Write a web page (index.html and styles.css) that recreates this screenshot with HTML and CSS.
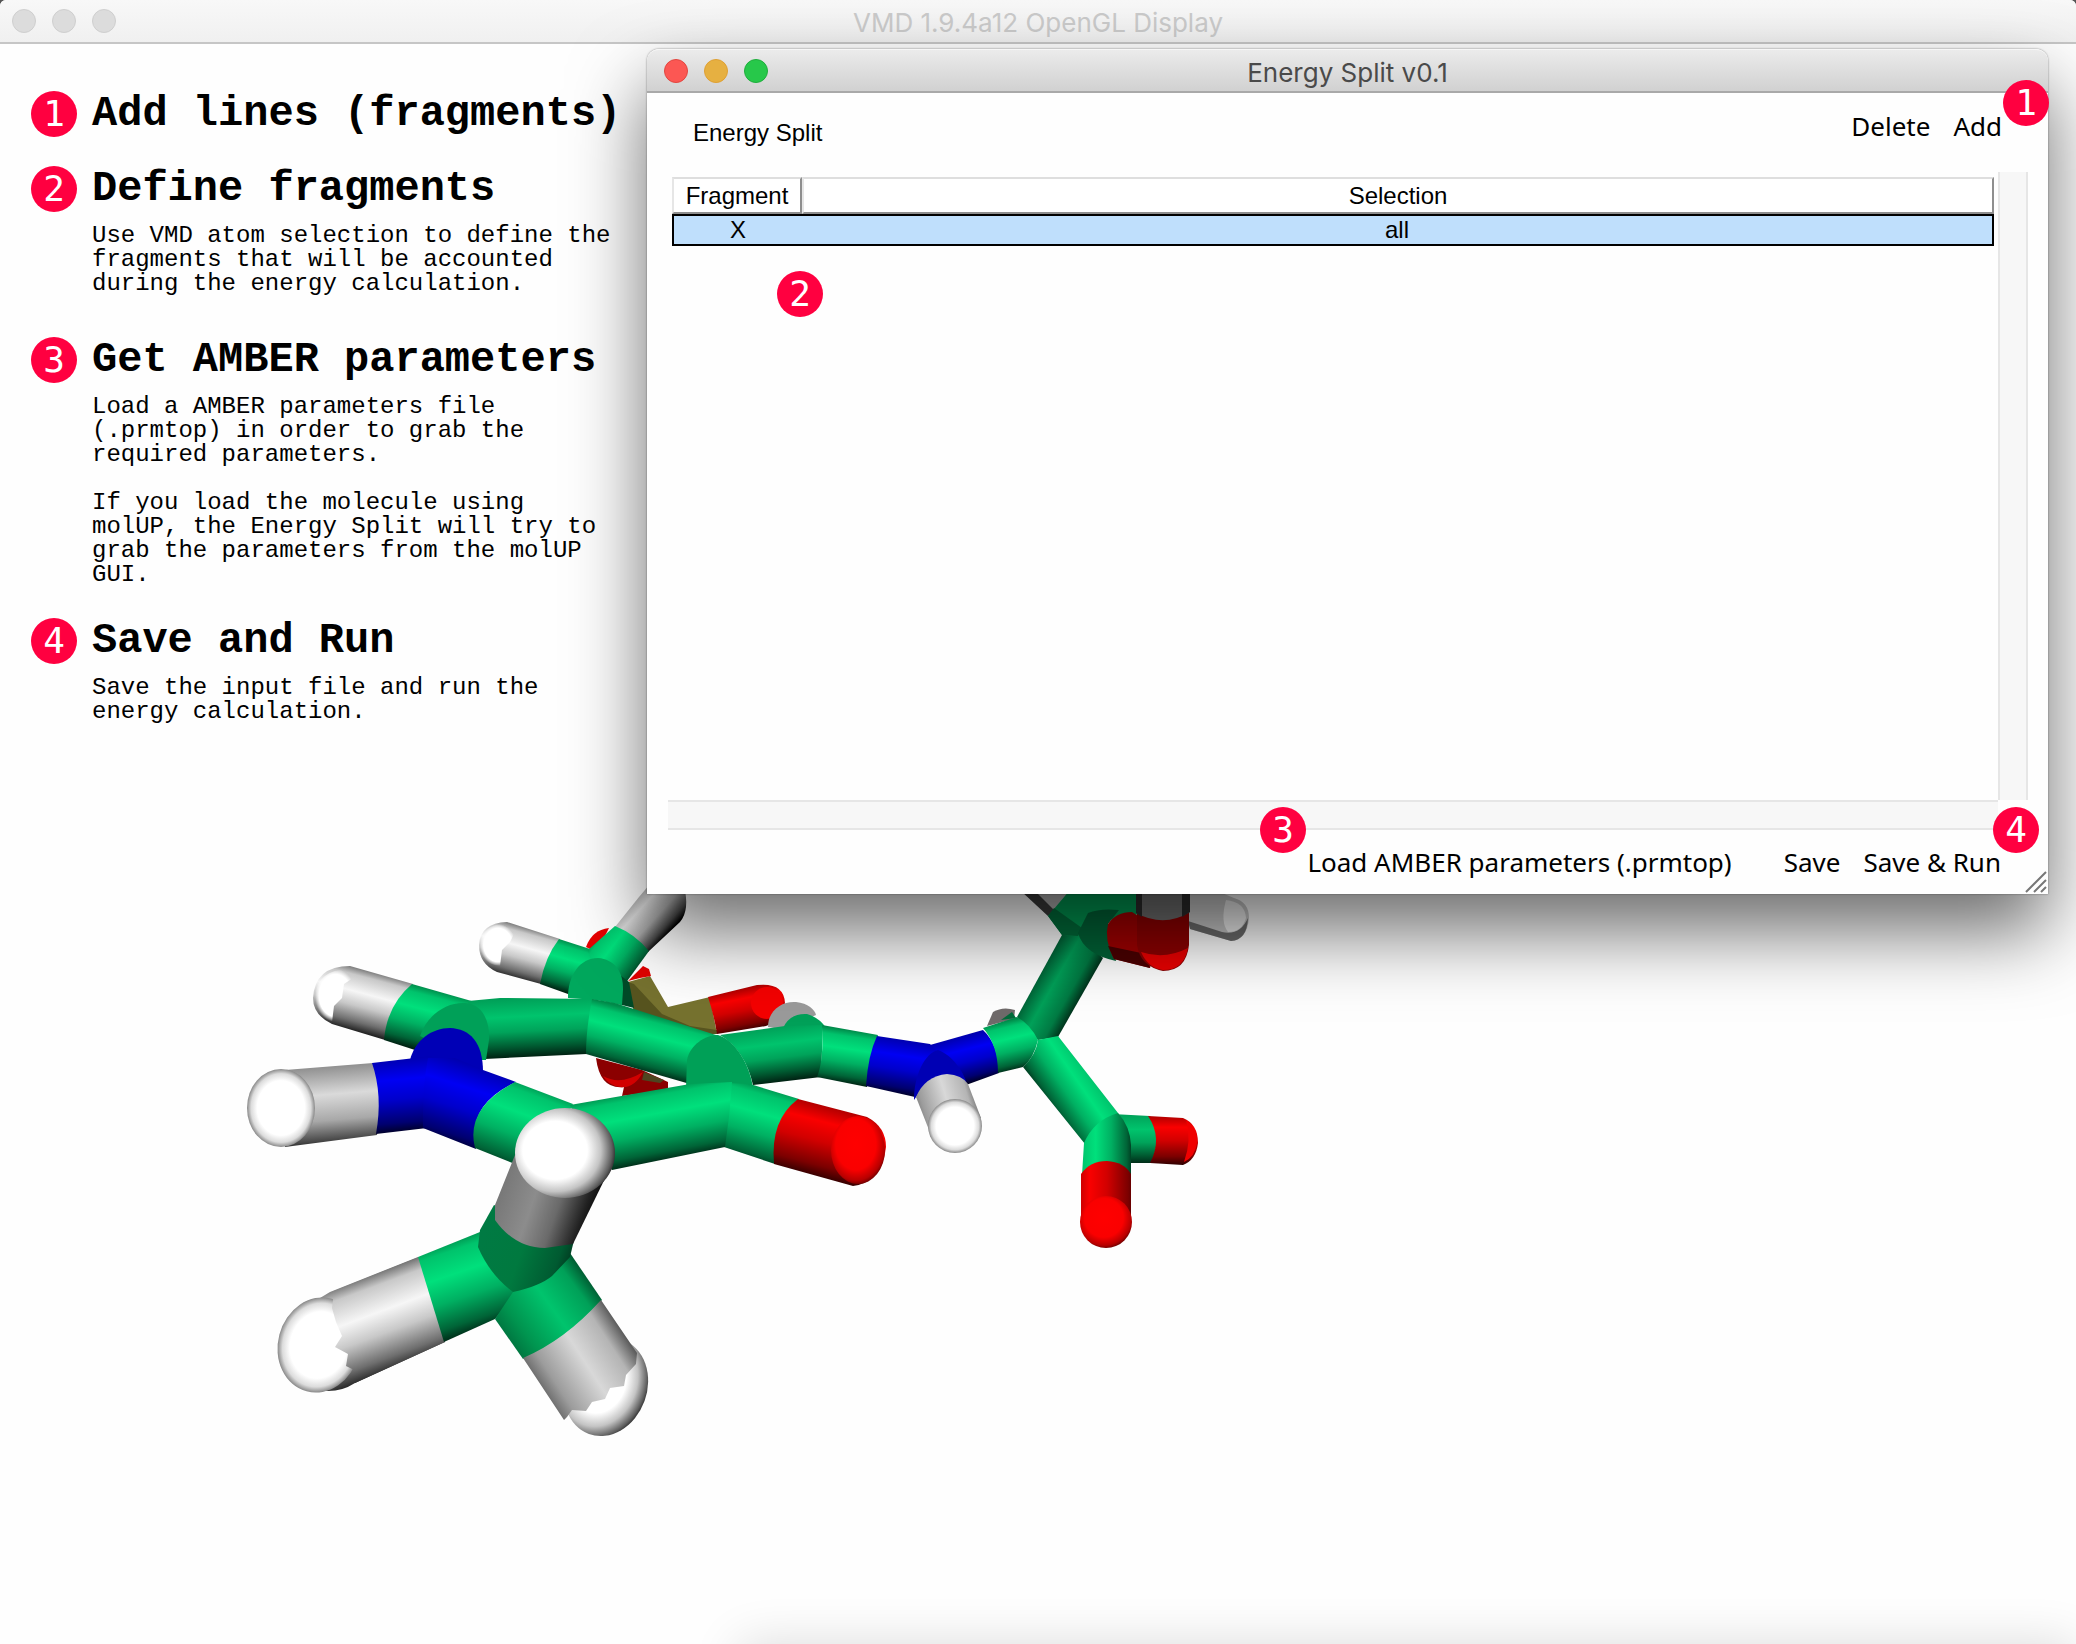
FILE: index.html
```html
<!DOCTYPE html>
<html lang="en">
<head>
<meta charset="utf-8">
<title>VMD 1.9.4a12 OpenGL Display</title>
<link rel="stylesheet" href="styles.css">
</head>
<body>
<div class="display">
  <header class="titlebar titlebar-inactive">
    <div class="lights">
      <button class="light" type="button" aria-label="Close display"></button>
      <button class="light" type="button" aria-label="Minimize display"></button>
      <button class="light" type="button" aria-label="Zoom display"></button>
    </div>
    <h1 class="title">VMD 1.9.4a12 OpenGL Display</h1>
  </header>

  <main class="stage">
    <svg class="molecule" viewBox="240 880 1020 570" width="1020" height="570" role="img" aria-label="Molecule">
      <defs>
        <linearGradient id="green"><stop offset="0" stop-color="#008a4a"/><stop offset=".12" stop-color="#00c36c"/><stop offset=".35" stop-color="#00e07c"/><stop offset=".6" stop-color="#00b062"/><stop offset=".85" stop-color="#006437"/><stop offset="1" stop-color="#001c0f"/></linearGradient>
        <linearGradient id="mid"><stop offset="0" stop-color="#00a058"/><stop offset=".3" stop-color="#00c46d"/><stop offset=".55" stop-color="#00a35a"/><stop offset=".8" stop-color="#005a31"/><stop offset="1" stop-color="#001a0e"/></linearGradient>
        <linearGradient id="side"><stop offset="0" stop-color="#006f3d"/><stop offset=".2" stop-color="#00944f"/><stop offset=".55" stop-color="#00c46d"/><stop offset=".85" stop-color="#00a058"/><stop offset="1" stop-color="#005a31"/></linearGradient>
        <linearGradient id="deep"><stop offset="0" stop-color="#005c33"/><stop offset=".35" stop-color="#00a058"/><stop offset=".7" stop-color="#007a43"/><stop offset="1" stop-color="#001a0e"/></linearGradient>
        <linearGradient id="shade"><stop offset="0" stop-color="#007a43"/><stop offset=".4" stop-color="#00793f"/><stop offset=".75" stop-color="#005a31"/><stop offset="1" stop-color="#001a0e"/></linearGradient>
        <linearGradient id="white"><stop offset="0" stop-color="#777"/><stop offset=".12" stop-color="#c8c8c8"/><stop offset=".38" stop-color="#f6f6f6"/><stop offset=".6" stop-color="#c8c8c8"/><stop offset=".85" stop-color="#6e6e6e"/><stop offset="1" stop-color="#222"/></linearGradient>
        <linearGradient id="silver"><stop offset="0" stop-color="#8a8a8a"/><stop offset=".35" stop-color="#dadada"/><stop offset=".65" stop-color="#a8a8a8"/><stop offset=".88" stop-color="#484848"/><stop offset="1" stop-color="#000"/></linearGradient>
        <linearGradient id="satin"><stop offset="0" stop-color="#6a6a6a"/><stop offset=".15" stop-color="#9c9c9c"/><stop offset=".5" stop-color="#d8d8d8"/><stop offset=".8" stop-color="#b4b4b4"/><stop offset="1" stop-color="#4a4a4a"/></linearGradient>
        <linearGradient id="gray"><stop offset="0" stop-color="#777"/><stop offset=".35" stop-color="#8c8c8c"/><stop offset=".6" stop-color="#6a6a6a"/><stop offset=".85" stop-color="#222"/><stop offset="1" stop-color="#000"/></linearGradient>
        <linearGradient id="blue"><stop offset="0" stop-color="#0000a8"/><stop offset=".3" stop-color="#0000f4"/><stop offset=".55" stop-color="#0000cc"/><stop offset=".85" stop-color="#000070"/><stop offset="1" stop-color="#000018"/></linearGradient>
        <linearGradient id="red"><stop offset="0" stop-color="#a00000"/><stop offset=".25" stop-color="#fa0000"/><stop offset=".5" stop-color="#d20000"/><stop offset=".8" stop-color="#7c0000"/><stop offset="1" stop-color="#1c0000"/></linearGradient>
        <radialGradient id="ball"><stop offset="0" stop-color="#fff"/><stop offset=".7" stop-color="#fff"/><stop offset=".88" stop-color="#dcdcdc"/><stop offset="1" stop-color="#888"/></radialGradient>
        <radialGradient id="ballshade" cx=".4" cy=".47" r=".62"><stop offset="0" stop-color="#fff"/><stop offset=".52" stop-color="#fff"/><stop offset=".74" stop-color="#c4c4c4"/><stop offset=".92" stop-color="#5e5e5e"/><stop offset="1" stop-color="#222"/></radialGradient>
        <radialGradient id="redball" cx=".46" cy=".42" r=".62"><stop offset="0" stop-color="#f00"/><stop offset=".6" stop-color="#fa0000"/><stop offset=".85" stop-color="#b80000"/><stop offset="1" stop-color="#500000"/></radialGradient>
        <radialGradient id="glow"><stop offset="0" stop-color="#fff"/><stop offset=".8" stop-color="#fff"/><stop offset="1" stop-color="#fff" stop-opacity="0"/></radialGradient>
        <linearGradient id="b1" href="#white" gradientUnits="userSpaceOnUse" x1="530" y1="928" x2="516" y2="979"/>
        <linearGradient id="b2" href="#green" gradientUnits="userSpaceOnUse" x1="575" y1="943" x2="561" y2="992"/>
        <linearGradient id="b3" href="#silver" gradientUnits="userSpaceOnUse" x1="620" y1="902" x2="662" y2="940"/>
        <linearGradient id="b4" href="#green" gradientUnits="userSpaceOnUse" x1="593" y1="938" x2="640" y2="974"/>
        <linearGradient id="b5" href="#white" gradientUnits="userSpaceOnUse" x1="382" y1="974" x2="366" y2="1034"/>
        <linearGradient id="b6" href="#green" gradientUnits="userSpaceOnUse" x1="440" y1="991" x2="424" y2="1052"/>
        <linearGradient id="b7" href="#mid" gradientUnits="userSpaceOnUse" x1="530" y1="998" x2="533" y2="1058"/>
        <linearGradient id="b8" href="#green" gradientUnits="userSpaceOnUse" x1="650" y1="1014" x2="635" y2="1072"/>
        <linearGradient id="b9" href="#mid" gradientUnits="userSpaceOnUse" x1="775" y1="1027" x2="782" y2="1083"/>
        <linearGradient id="b10" href="#green" gradientUnits="userSpaceOnUse" x1="850" y1="1030" x2="842" y2="1084"/>
        <linearGradient id="b11" href="#blue" gradientUnits="userSpaceOnUse" x1="902" y1="1038" x2="893" y2="1095"/>
        <linearGradient id="b12" href="#blue" gradientUnits="userSpaceOnUse" x1="958" y1="1036" x2="970" y2="1084"/>
        <linearGradient id="b13" href="#satin" gradientUnits="userSpaceOnUse" x1="915" y1="1116" x2="982" y2="1096"/>
        <linearGradient id="b14" href="#green" gradientUnits="userSpaceOnUse" x1="1002" y1="1022" x2="1014" y2="1072"/>
        <linearGradient id="b15" href="#deep" gradientUnits="userSpaceOnUse" x1="1038" y1="974" x2="1084" y2="1000"/>
        <linearGradient id="b16" href="#green" gradientUnits="userSpaceOnUse" x1="1098" y1="1072" x2="1046" y2="1108"/>
        <linearGradient id="b17" href="#mid" gradientUnits="userSpaceOnUse" x1="1134" y1="1114" x2="1134" y2="1166"/>
        <linearGradient id="b18" href="#red" gradientUnits="userSpaceOnUse" x1="1166" y1="1114" x2="1166" y2="1167"/>
        <linearGradient id="b19" href="#green" gradientUnits="userSpaceOnUse" x1="1074" y1="1150" x2="1136" y2="1150"/>
        <linearGradient id="b20" href="#red" gradientUnits="userSpaceOnUse" x1="1072" y1="1190" x2="1142" y2="1190"/>
        <linearGradient id="b21" href="#silver" gradientUnits="userSpaceOnUse" x1="330" y1="1064" x2="337" y2="1150"/>
        <linearGradient id="b22" href="#blue" gradientUnits="userSpaceOnUse" x1="398" y1="1056" x2="405" y2="1134"/>
        <linearGradient id="b23" href="#blue" gradientUnits="userSpaceOnUse" x1="474" y1="1062" x2="447" y2="1146"/>
        <linearGradient id="b24" href="#green" gradientUnits="userSpaceOnUse" x1="540" y1="1086" x2="508" y2="1172"/>
        <linearGradient id="b25" href="#green" gradientUnits="userSpaceOnUse" x1="646" y1="1088" x2="660" y2="1164"/>
        <linearGradient id="b26" href="#green" gradientUnits="userSpaceOnUse" x1="768" y1="1086" x2="746" y2="1164"/>
        <linearGradient id="b27" href="#red" gradientUnits="userSpaceOnUse" x1="833" y1="1104" x2="813" y2="1180"/>
        <linearGradient id="b28" href="#gray" gradientUnits="userSpaceOnUse" x1="500" y1="1188" x2="596" y2="1222"/>
        <linearGradient id="b29" href="#green" gradientUnits="userSpaceOnUse" x1="446" y1="1240" x2="478" y2="1334"/>
        <linearGradient id="b30" href="#white" gradientUnits="userSpaceOnUse" x1="358" y1="1280" x2="392" y2="1372"/>
        <linearGradient id="b31" href="#side" gradientUnits="userSpaceOnUse" x1="505" y1="1342" x2="590" y2="1280"/>
        <linearGradient id="b32" href="#satin" gradientUnits="userSpaceOnUse" x1="538" y1="1384" x2="624" y2="1328"/>
        <linearGradient id="b33" href="#red" gradientUnits="userSpaceOnUse" x1="736" y1="988" x2="745" y2="1034"/>
        <linearGradient id="b34" href="#shade" gradientUnits="userSpaceOnUse" x1="484" y1="1230" x2="584" y2="1266"/>
      </defs>
      <g class="phosphate">
        <path fill="#e60000" d="M586 947Q592 930 609 928L602 942 590 949Z"/>
        <path fill="#76722f" d="M628 982L650 976 668 1007 710 997 717 1034 690 1034 634 1012Z"/>
        <path fill="#57541f" d="M628 982L634 984 662 1014 690 1026 717 1030 717 1034 690 1034 634 1012Z"/>
        <path fill="#e00000" d="M628 981L643 966 649 969 651 976 640 978Z"/>
        <path fill="url(#b33)" d="M708 997L757 985Q784 982 785 1003 780 1022 766 1026L717 1034Q714 1015 708 997Z"/>
        <circle cx="767" cy="1003" r="16" fill="#f40000"/>
        <path fill="#8b0000" d="M596 1058L642 1070 668 1082V1090L622 1096 624 1087Q600 1090 596 1058Z"/>
        <path fill="#d20000" d="M603 1076Q620 1086 643 1072 634 1089 620 1087 608 1085 603 1076Z"/>
        <path fill="#4d4520" d="M644 1072L664 1080 660 1083 642 1080Z"/>
      </g>
      <g class="methyl-back">
        <path fill="url(#b1)" d="M507 922L560 939Q545 957 541 984L497 972Q479 964 479 945 480 923 507 922Z"/>
        <path fill="url(#glow)" d="M480 945Q482 924 505 924L516 930 510 942 502 950 500 966Q480 964 480 945Z"/>
        <path fill="url(#b2)" d="M559 939L590 949 620 1000 568 994 540 984Q545 957 559 939Z"/>
        <path fill="url(#b3)" d="M615 927L639 897 650 884 684 886Q690 910 680 922L648 952Q632 936 615 927Z"/>
        <path fill="url(#b4)" d="M615 926Q635 934 649 951L625 984 600 1000 588 950Z"/>
        <path fill="#004a28" d="M620 975L629 982 634 1008 618 1004Z"/>
        <path fill="#00a85d" d="M568 998C568 975 580 958 598 958 614 959 624 972 623 990L622 1005 596 1000Z"/>
      </g>
      <g class="side-chain">
        <path fill="#9a9a9a" d="M768 1027C768 1010 782 1001 796 1002 808 1003 815 1010 816 1015L800 1022 780 1029Z"/>
        <path fill="#00a058" d="M783 1028Q790 1013 807 1014 820 1018 826 1028Z"/>
        <path fill="url(#b9)" d="M720 1035L785 1026 823 1025 821 1077 753 1085Q745 1050 720 1035Z"/>
        <path fill="url(#b10)" d="M822 1025L878 1035Q869 1055 867 1087L817 1077Q824 1060 822 1025Z"/>
        <path fill="url(#b12)" d="M930 1045L983 1030Q999 1045 999 1073L966 1085 930 1070Z"/>
        <path fill="url(#b11)" d="M877 1036L930 1044 945 1060 915 1097 866 1086Q868 1055 877 1036Z"/>
        <path fill="#0000b4" d="M914 1100C914 1075 925 1053 938 1050 952 1055 965 1072 968 1088L958 1082 925 1084Z"/>
        <path fill="url(#b13)" d="M916 1097Q925 1076 947 1074 962 1075 968 1084L981 1118 955 1140 929 1130Z"/>
        <circle cx="955" cy="1126" r="27" fill="url(#ball)"/>
        <path fill="#6f6a6a" d="M987 1026L993 1012Q1003 1006 1015 1010L1014 1019Z"/>
        <path fill="#006b3a" d="M1001 1020L1012 1012 1016 1018Z"/>
        <path fill="url(#b15)" d="M1017 1017L1062 935 1078 932 1103 958 1058 1037 1038 1040Z"/>
        <path fill="url(#b14)" d="M983 1028L1017 1017Q1030 1024 1038 1040 1034 1058 1023 1067L998 1073Q998 1045 983 1028Z"/>
        <path fill="url(#b17)" d="M1112 1114L1150 1116Q1163 1138 1151 1163L1125 1163Z"/>
        <path fill="url(#b18)" d="M1148 1116L1183 1118Q1198 1124 1198 1143 1196 1160 1183 1165L1150 1163Q1163 1138 1148 1116Z"/>
        <path fill="#f00000" d="M1186 1120Q1198 1128 1197 1143 1195 1157 1184 1162 1192 1140 1186 1120Z"/>
        <path fill="url(#b16)" d="M1038 1040L1058 1036 1118 1113 1128 1130 1120 1150 1085 1144 1023 1067Q1036 1055 1038 1040Z"/>
        <path fill="url(#b19)" d="M1084 1143Q1094 1120 1118 1113 1130 1126 1131 1145V1175L1107 1165 1082 1175Z"/>
        <path fill="url(#b20)" d="M1081 1174Q1090 1161 1107 1161 1124 1162 1131 1174V1222H1081Z"/>
        <circle cx="1106" cy="1222" r="26" fill="url(#redball)"/>
        <path fill="#b0b0b0" d="M1020 890H1072L1048 916Z"/>
        <path fill="#3c3c3c" d="M1020 890H1034L1054 910 1048 916Z"/>
        <path fill="#009852" d="M1070 890H1140V914L1100 922 1078 936 1062 935 1048 916Z"/>
        <path fill="#006c3a" d="M1048 916L1054 908 1082 928 1078 936 1062 935Z"/>
        <path fill="#006236" d="M1088 913Q1100 908 1119 910L1108 924 1116 961Q1084 954 1078 933Z"/>
        <path fill="#a00000" d="M1108 924Q1116 912 1132 912L1160 930 1150 968 1114 959Q1104 940 1108 924Z"/>
        <path fill="#4a0000" d="M1108 946L1146 954 1150 968 1114 959Z"/>
        <path fill="#c8c8c8" d="M1180 888H1210L1234 898Q1249 902 1249 918 1247 940 1231 941L1190 929Z"/>
        <path fill="#6c6c6c" d="M1188 921L1222 932Q1240 936 1248 918 1247 940 1231 941L1190 929Z"/>
        <path fill="#eee" d="M1226 900Q1245 902 1246 918 1242 932 1228 932 1220 922 1226 900Z"/>
        <path fill="#8c0000" d="M1137 910H1189V945Q1186 971 1163 971 1140 966 1137 945Z"/>
        <path fill="#e80000" d="M1141 952Q1165 960 1188 948 1184 970 1163 970 1148 968 1141 952Z"/>
        <path fill="#6e6e6e" d="M1136 888H1190V912Q1164 928 1136 913Z"/>
        <path fill="#2c2c2c" d="M1136 888H1142V917L1136 913ZM1182 888H1190V912L1182 917Z"/>
      </g>
      <g class="ring">
        <path fill="url(#b5)" d="M350 966L413 984Q388 1005 385 1040L332 1024Q313 1015 313 998 315 966 350 966Z"/>
        <path fill="url(#glow)" d="M315 995Q318 970 348 969L356 976 344 984 342 998 334 1006 332 1022Q314 1016 315 995Z"/>
        <path fill="url(#b6)" d="M412 984L475 1002 440 1045 415 1050 384 1040Q387 1005 412 984Z"/>
        <path fill="url(#b7)" d="M468 1001L500 998 593 999 598 1002 587 1054 485 1059 470 1040Z"/>
        <path fill="#00a058" d="M420 1036C428 1013 448 1002 465 1003 482 1004 490 1020 489 1040L486 1060 470 1060Z"/>
        <path fill="url(#b8)" d="M592 999L615 1003 716 1035Q696 1050 690 1084L586 1054Q586 1030 592 999Z"/>
        <path fill="#00a057" d="M686 1088L687 1060C690 1045 705 1035 718 1035 735 1040 750 1065 753 1088Z"/>
        <path fill="url(#b21)" d="M285 1070L373 1063Q384 1095 377 1135L285 1147Z"/>
        <ellipse cx="281" cy="1108" rx="34" ry="39" fill="url(#ball)"/>
        <path fill="#0000b6" d="M410 1060C415 1040 432 1028 450 1028 470 1029 483 1042 483 1072L430 1070Z"/>
        <path fill="url(#b22)" d="M372 1063L432 1056 427 1128 376 1134Q383 1095 372 1063Z"/>
        <path fill="url(#b23)" d="M428 1058L455 1058 483 1070 516 1082Q466 1105 476 1149L423 1128Q422 1090 428 1058Z"/>
        <path fill="url(#b24)" d="M515 1082L573 1104 560 1130 515 1164 475 1148Q465 1108 515 1082Z"/>
        <path fill="url(#b26)" d="M728 1083L750 1084 799 1099Q771 1120 775 1164L724 1147Z"/>
        <path fill="url(#b25)" d="M570 1105L690 1084 732 1082Q730 1115 725 1147L612 1170 580 1130Z"/>
        <path fill="url(#b27)" d="M798 1099L867 1117Q886 1127 886 1147 882 1182 853 1186L774 1164Q770 1120 798 1099Z"/>
        <ellipse cx="858" cy="1150" rx="27" ry="34" fill="url(#redball)"/>
      </g>
      <g class="methyl-front">
        <path fill="url(#b30)" d="M418 1257L330 1292 300 1310 310 1388Q335 1396 355 1383L445 1342Z"/>
        <ellipse cx="319" cy="1345" rx="41" ry="48" fill="url(#ball)" transform="rotate(15 319 1345)"/>
        <path fill="url(#b30)" d="M419 1257L334 1291 332 1308 336 1322 342 1336 335 1347 348 1354 346 1366 354 1370 355 1383 445 1342Z"/>
        <path fill="url(#b29)" d="M480 1232L418 1257 444 1342 495 1319 520 1290Z"/>
        <ellipse cx="606" cy="1387" rx="41" ry="50" fill="url(#ballshade)" transform="rotate(20 606 1387)"/>
        <path fill="url(#b31)" d="M513 1292L570 1253 602 1300Q565 1341 523 1359L495 1319Z"/>
        <path fill="url(#b32)" d="M601 1300L637 1353 636 1364 626 1375 624 1386 610 1388 605 1399 592 1402 586 1411 572 1410 567 1417 564 1420 523 1358Q565 1340 601 1300Z"/>
        <path fill="url(#b34)" d="M494 1205L480 1230 478 1247Q490 1275 513 1292 540 1286 552 1276L570 1257 575 1236Z"/>
        <path fill="url(#b28)" d="M515 1155L495 1205V1220Q515 1248 545 1248L573 1244 614 1160Z"/>
        <ellipse cx="565" cy="1153" rx="50" ry="45" fill="url(#ballshade)"/>
      </g>
    </svg>

    <ol class="steps">
      <li class="step">
        <span class="badge">1</span>
        <h2>Add lines (fragments)</h2>
      </li>
      <li class="step step-define">
        <span class="badge">2</span>
        <h2>Define fragments</h2>
        <p>Use VMD atom selection to define the<br>fragments that will be accounted<br>during the energy calculation.</p>
      </li>
      <li class="step step-load">
        <span class="badge">3</span>
        <h2>Get AMBER parameters</h2>
        <p>Load a AMBER parameters file<br>(.prmtop) in order to grab the<br>required parameters.</p>
        <p class="note">If you load the molecule using<br>molUP, the Energy Split will try to<br>grab the parameters from the molUP<br>GUI.</p>
      </li>
      <li class="step">
        <span class="badge">4</span>
        <h2>Save and Run</h2>
        <p>Save the input file and run the<br>energy calculation.</p>
      </li>
    </ol>
  </main>

  <section class="window" aria-labelledby="window-title">
    <header class="titlebar titlebar-active">
      <div class="lights">
        <button class="light light-close" type="button" aria-label="Close"></button>
        <button class="light light-minimize" type="button" aria-label="Minimize"></button>
        <button class="light light-zoom" type="button" aria-label="Zoom"></button>
      </div>
      <h2 class="title" id="window-title">Energy Split v0.1</h2>
    </header>
    <div class="toolbar">
      <span class="toolbar-label">Energy Split</span>
      <button class="action" type="button">Delete</button>
      <button class="action" type="button">Add</button>
    </div>
    <div class="viewer">
      <div class="list">
        <table class="fragments">
          <colgroup><col class="col-fragment"><col></colgroup>
          <thead><tr><th scope="col">Fragment</th><th scope="col">Selection</th></tr></thead>
          <tbody><tr class="selected"><td>X</td><td>all</td></tr></tbody>
        </table>
      </div>
      <div class="track track-vertical"></div>
      <div class="track track-horizontal"></div>
    </div>
    <footer class="actions">
      <button class="action action-load" type="button">Load AMBER parameters (.prmtop)</button>
      <button class="action" type="button">Save</button>
      <button class="action" type="button">Save &amp; Run</button>
      <svg class="grip" viewBox="0 0 22 22" width="22" height="22" aria-hidden="true"><path d="M1 21L21 1M9 21L21 9M16 21L21 16" fill="none" stroke="#777" stroke-width="2"/></svg>
    </footer>
    <span class="badge pin pin-add">1</span>
    <span class="badge pin pin-define">2</span>
    <span class="badge pin pin-load">3</span>
    <span class="badge pin pin-run">4</span>
  </section>
</div>
</body>
</html>
```

FILE: styles.css
```css
* { box-sizing: border-box; }

body {
  margin: 0;
  background: #555;
  color: #000;
  font-family: "Liberation Sans", Arial, sans-serif;
  font-size: 24px;
}

h1, h2, p, ol { margin: 0; padding: 0; }

button {
  margin: 0;
  padding: 0;
  border: 0;
  background: none;
  color: inherit;
  cursor: pointer;
}

.display {
  position: relative;
  min-height: 100vh;
  overflow: hidden;
  border-radius: 6px 6px 0 0;
  background: #fefefe;
}

/* Shadow of the window that sits below the display */
.display::after {
  content: "";
  position: absolute;
  top: 100%;
  left: 740px;
  right: 0;
  height: 100px;
  box-shadow: 0 0 50px rgba(0, 0, 0, 0.14);
}

/* Title bars */
.titlebar {
  display: grid;
  grid-template-columns: 1fr auto 1fr;
  align-items: center;
  height: 44px;
}

.titlebar-inactive {
  padding: 0 12px;
  border-bottom: 2px solid #c6c6c6;
  background: linear-gradient(#f8f8f8, #f0f0f0);
  color: #cacaca;
}

.titlebar-active {
  padding: 0 17px;
  border-top: 1px solid #f6f6f6;
  border-bottom: 2px solid #a9a9a9;
  border-radius: 12px 12px 0 0;
  background: linear-gradient(#ebebeb, #d1d1d1);
  color: #4a4a4a;
}

.title {
  padding-top: 4px;
  font: 400 26px/30px Inter, "Liberation Sans", sans-serif;
}

.lights { display: flex; gap: 16px; }

.light {
  width: 24px;
  height: 24px;
  border: 1px solid #cfcfcf;
  border-radius: 50%;
  background: #dcdcdc;
}

.light-close { border-color: #e2463f; background: #fc5753; }
.light-minimize { border-color: #dfa033; background: #e6b041; }
.light-zoom { border-color: #1fae3c; background: #27c84a; }

/* Instructions */
.stage { padding: 47px 31px; }

.steps {
  display: flex;
  flex-direction: column;
  gap: 29px;
  width: 600px;
  list-style: none;
  position: relative;
}

.step {
  display: grid;
  grid-template-columns: 46px 1fr;
  column-gap: 15px;
  font-family: "Liberation Mono", "Courier New", monospace;
}

.step h2 { font-size: 42px; line-height: 46px; white-space: nowrap; }

.step p {
  grid-column: 2;
  margin-top: 12px;
  font-size: 24px;
  line-height: 24px;
  white-space: nowrap;
}

.step .note { margin-top: 24px; }
.step-define { margin-bottom: 12px; }
.step-load { margin-bottom: 2px; }

.badge {
  width: 46px;
  height: 46px;
  border-radius: 50%;
  background: #ff0040;
  color: #fff;
  font: 400 36px/46px "DejaVu Sans Mono", monospace;
  text-align: center;
}

.molecule {
  position: absolute;
  left: 240px;
  top: 880px;
}

/* Energy Split window */
.window {
  position: absolute;
  left: 647px;
  right: 28px;
  top: 49px;
  border-radius: 12px 12px 0 0;
  background: #fefefe;
  box-shadow: 0 38px 76px rgba(0, 0, 0, 0.57), 0 0 2px rgba(0, 0, 0, 0.5);
}

.toolbar {
  display: flex;
  align-items: flex-start;
  gap: 23px;
  height: 79px;
  padding: 15px 46px 0;
}

.toolbar-label {
  flex: 1;
  padding-top: 7px;
  line-height: 36px;
}

.action {
  font: 400 26px/36px "Noto Sans", sans-serif;
  white-space: nowrap;
}

.viewer {
  display: grid;
  grid-template-columns: 1fr 30px;
  grid-template-rows: minmax(628px, auto) 30px;
  margin: 0 20px 0 21px;
}

.list { padding: 5px 4px 0; }

.fragments {
  width: 100%;
  border-collapse: separate;
  border-spacing: 0;
  table-layout: fixed;
  text-align: center;
}

.col-fragment { width: 130px; }

.fragments th {
  height: 37px;
  padding: 0;
  border: 2px solid #8e8e8e;
  border-top-color: #dedede;
  border-left-color: #e6e6e6;
  background: #fff;
  font-weight: 400;
  line-height: 32px;
}

.fragments td {
  height: 32px;
  padding: 0;
  border: 2px solid #000;
  background: #bfdffc;
  line-height: 28px;
}

.fragments td:first-child { border-right: 0; }
.fragments td:last-child { border-left: 0; }

.track { background: #f7f7f7; }

.track-vertical {
  border: solid #e6e6e6;
  border-width: 0 2px;
}

.track-horizontal {
  border: solid #e6e6e6;
  border-width: 2px 0;
}

.actions {
  position: relative;
  display: flex;
  justify-content: flex-end;
  align-items: flex-start;
  gap: 23px;
  height: 64px;
  padding: 14px 47px 0;
}

.action-load { margin-right: 29px; }

.grip {
  position: absolute;
  right: 1px;
  bottom: 1px;
}

.pin { position: absolute; }
.pin-add { right: -1px; top: 31px; }
.pin-define { left: 130px; top: 222px; }
.pin-load { right: 742px; bottom: 41px; }
.pin-run { right: 9px; bottom: 41px; }
```
